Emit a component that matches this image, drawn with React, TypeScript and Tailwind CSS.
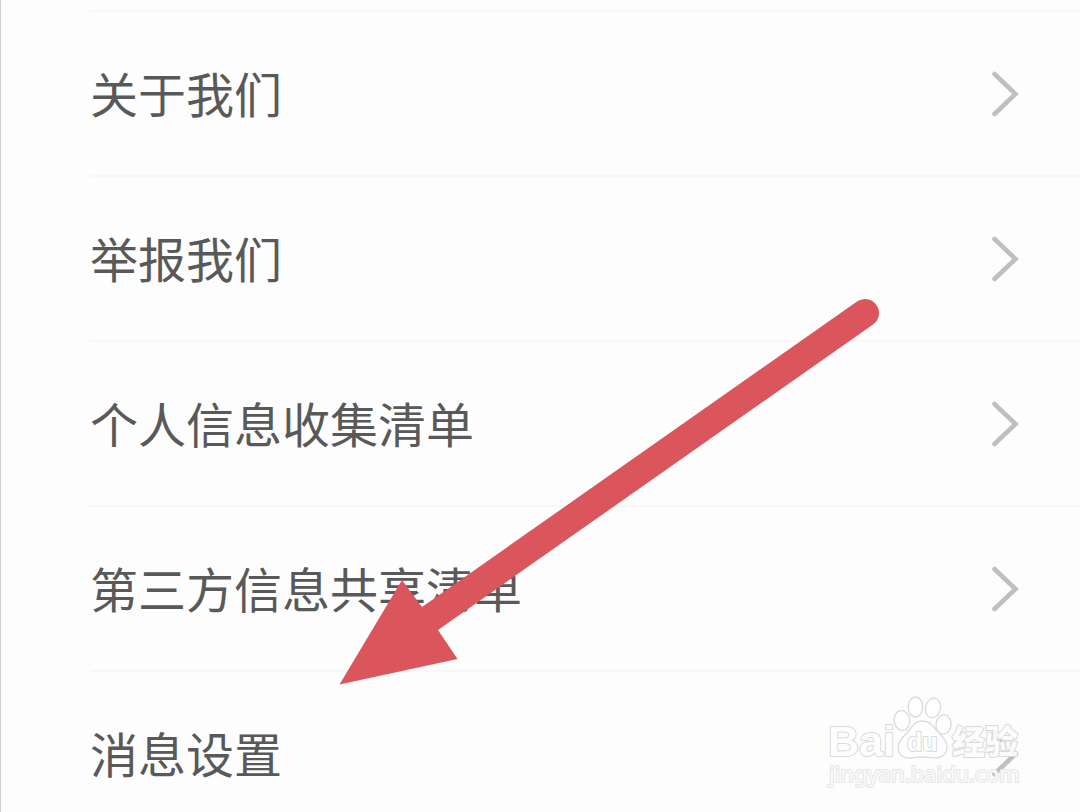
const items = [
  "关于我们",
  "举报我们",
  "个人信息收集清单",
  "第三方信息共享清单",
  "消息设置",
];

function Chevron() {
  return (
    <svg className="h-12 w-8 shrink-0" viewBox="0 0 32 48" fill="none" aria-hidden="true">
      <path d="M6.500 4 L27.500 24 L6.500 44" stroke="#bfbfbf" strokeWidth="4.600" strokeLinecap="round" />
    </svg>
  );
}

function Arrow() {
  return (
    <svg
      className="pointer-events-none absolute top-[298px] left-[338px] h-[388px] w-[542px]"
      viewBox="339 298 542 388"
      aria-hidden="true"
    >
      <path
        d="M339.500 684.500 L402 580 L422 607 L857 301.500 A14 14 0 0 1 873 324.500 L438 630 L457.500 659 Z"
        fill="#da565c"
      />
    </svg>
  );
}

function Watermark() {
  return (
    <svg
      className="pointer-events-none absolute top-[690px] left-[819px] h-[106px] w-[210px]"
      viewBox="820 690 210 106"
      aria-label="Baidu 经验"
    >
      <g
        fill="#fefefe"
        stroke="#dadada"
        strokeWidth="2"
        strokeLinejoin="round"
        paintOrder="stroke"
        fontFamily="'Liberation Sans', 'Noto Sans CJK SC', sans-serif"
      >
        <text x="828" y="756" fontSize="43" fontWeight="700">Bai</text>
        <g strokeWidth="1.300" paintOrder="normal">
          <ellipse cx="902" cy="720.500" rx="7.800" ry="10" transform="rotate(-8 902 720.500)" />
          <ellipse cx="915.500" cy="707" rx="7.200" ry="10" />
          <ellipse cx="933" cy="708" rx="7.500" ry="9.800" transform="rotate(12 933 708)" />
          <ellipse cx="943.500" cy="724.500" rx="7.500" ry="9.800" transform="rotate(8 943.500 724.500)" />
          <path d="M922 721 C914 721 911 729 905 735 C900 740 898 743 898 748 C899 755 903 758 909 758 C915 758 917 757 922 757 C928 757 932 758 937 758 C943 757 947 753 947 747 C947 741 943 738 939 733 C934 728 931 721 922 721 Z" />
        </g>
        <text x="907" y="751" fontSize="25" fontWeight="700">du</text>
        <text x="952" y="754" fontSize="33" fontWeight="900" fillOpacity="0.900">经验</text>
        <text
          x="829"
          y="782"
          fontSize="22"
          fillOpacity="0.800"
          stroke="#e6e6e6"
          fontFamily="'Noto Sans', 'Open Sans', sans-serif"
        >
          jingyan.baidu.com
        </text>
      </g>
    </svg>
  );
}

export default function App() {
  return (
    <main className="relative h-screen overflow-hidden border-l border-[#cdcdcd] bg-[#fdfdfd] pt-2.5 font-['Noto_Sans_CJK_SC',sans-serif] text-[#595959]">
      <ul>
        {items.map((item) => (
          <li key={item} className="pl-[89px]">
            <a
              href="#"
              className="flex h-[165px] items-center justify-between border-t-2 border-[#f7f7f7] pr-[60px]"
            >
              <span className="pb-1 text-5xl leading-none">{item}</span>
              <Chevron />
            </a>
          </li>
        ))}
      </ul>
      <Arrow />
      <Watermark />
    </main>
  );
}
